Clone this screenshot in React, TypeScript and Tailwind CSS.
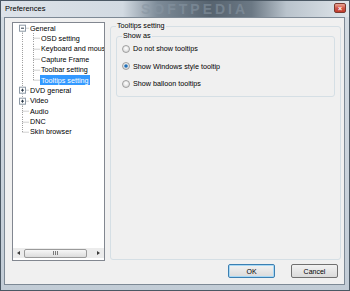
import React from "react";

type Row = {
  label: string;
  level: 0 | 1;
  box?: "-" | "+";
  last?: boolean;
  first?: boolean;
  selected?: boolean;
};

const rows: Row[] = [
  { label: "General", level: 0, box: "-", first: true },
  { label: "OSD setting", level: 1 },
  { label: "Keyboard and mouse", level: 1 },
  { label: "Capture Frame", level: 1 },
  { label: "Toolbar setting", level: 1 },
  { label: "Tooltips setting", level: 1, last: true, selected: true },
  { label: "DVD general", level: 0, box: "+" },
  { label: "Video", level: 0, box: "+" },
  { label: "Audio", level: 0 },
  { label: "DNC", level: 0 },
  { label: "Skin browser", level: 0, last: true },
];

const H = 10.4;
const MID = 5.2;
const LINE = "#a0a0a0";

const Connector = ({ row }: { row: Row }) => {
  const w = row.level === 0 ? 16 : 27;
  return (
    <svg width={w} height={H} className="shrink-0">
      {/* root vertical line */}
      {row.level === 1 && (
        <line x1={9.5} y1={0} x2={9.5} y2={H} stroke={LINE} strokeDasharray="1 1" />
      )}
      {row.level === 0 && !row.box && (
        <line x1={9.5} y1={0} x2={9.5} y2={row.last ? MID : H} stroke={LINE} strokeDasharray="1 1" />
      )}
      {row.level === 0 && row.box && (
        <>
          {!row.first && <line x1={9.5} y1={0} x2={9.5} y2={2} stroke={LINE} strokeDasharray="1 1" />}
          <line x1={9.5} y1={8.5} x2={9.5} y2={H} stroke={LINE} strokeDasharray="1 1" />
          <line x1={12.5} y1={MID} x2={16} y2={MID} stroke={LINE} strokeDasharray="1 1" />
          <rect x={6.5} y={2.2} width={6} height={6} fill="#fff" stroke="#8e9aa6" />
          <line x1={8} y1={MID} x2={11} y2={MID} stroke="#2b3a4a" />
          {row.box === "+" && <line x1={9.5} y1={MID - 1.5} x2={9.5} y2={MID + 1.5} stroke="#2b3a4a" />}
        </>
      )}
      {row.level === 0 && !row.box && (
        <line x1={9.5} y1={MID} x2={16} y2={MID} stroke={LINE} strokeDasharray="1 1" />
      )}
      {/* child lines */}
      {row.level === 1 && (
        <>
          <line x1={20.5} y1={0} x2={20.5} y2={row.last ? MID : H} stroke={LINE} strokeDasharray="1 1" />
          <line x1={20.5} y1={MID} x2={27} y2={MID} stroke={LINE} strokeDasharray="1 1" />
        </>
      )}
    </svg>
  );
};

const Radio = ({ checked }: { checked?: boolean }) => (
  <svg width={8} height={8} viewBox="0 0 8 8" className="shrink-0">
    <defs>
      <radialGradient id={checked ? "rg1" : "rg0"} cx="50%" cy="40%" r="60%">
        <stop offset="0%" stopColor="#ffffff" />
        <stop offset="100%" stopColor="#d6d6d6" />
      </radialGradient>
    </defs>
    <circle cx={4} cy={4} r={3.5} fill={`url(#${checked ? "rg1" : "rg0"})`} stroke="#8f8f8f" strokeWidth={0.8} />
    {checked && <circle cx={4} cy={4} r={1.8} fill="#1f6fb8" />}
  </svg>
);

export default function App() {
  return (
    <div className="w-[350px] h-[291px] flex flex-col overflow-hidden border border-[#4b5864] bg-gradient-to-b from-[#d4dce3] to-[#c2ccd6] font-['Liberation_Sans',Arial,sans-serif] text-black select-none">
      {/* Title bar */}
      <div className="relative h-[16px] flex items-center pl-[4px] pr-[3px] bg-[linear-gradient(90deg,#dde3e9_0%,#d2dae2_35%,#7d8b98_45%,#56636f_60%,#6b7884_72%,#b9c3cc_82%,#dfe5ea_100%)]">
        <span className="relative z-10 text-[7.5px] leading-none">Preferences</span>
        <span className="absolute left-[140px] top-[1px] text-[14px] font-bold leading-none tracking-[3px] text-[#8795a2]/60">
          SOFTPEDIA
        </span>
        <div className="ml-auto relative z-10 w-[12px] h-[10px] mt-[-2px] rounded-[2px] border border-[#7a3a30] bg-gradient-to-b from-[#e9a595] via-[#d0574a] to-[#c03a2a] flex items-center justify-center">
          <span className="text-[7px] leading-none font-bold text-white">×</span>
        </div>
      </div>

      {/* Client area */}
      <div className="flex-1 ml-[3px] mr-[4px] mb-[5px] border border-[#7d8995] bg-[#f0f0f0] flex flex-col text-[7.2px] leading-none">
        <div className="flex items-start pt-[4px] pl-[7px] pr-[3px] gap-[5px] h-[243px]">
          {/* Tree */}
          <div className="w-[93px] h-[239px] border border-[#828790] bg-white flex flex-col overflow-hidden">
            {rows.map((r) => (
              <div key={r.label} className="flex items-center h-[10.4px] whitespace-nowrap">
                <Connector row={r} />
                <span
                  className={`px-[1px] h-[10px] flex items-center ${
                    r.selected ? "bg-[#3399ff] text-white" : ""
                  }`}
                >
                  {r.label}
                </span>
              </div>
            ))}
            <div className="flex-1" />
            {/* horizontal scrollbar */}
            <div className="mb-[2px] h-[10px] flex items-center bg-[#ececec]">
              <div className="w-[11px] h-full flex items-center justify-center">
                <div className="w-0 h-0 border-y-[2.5px] border-y-transparent border-r-[3px] border-r-[#3a3a3a]" />
              </div>
              <div className="w-[63px] h-[9px] rounded-[2px] border border-[#9a9a9a] bg-gradient-to-b from-[#f7f7f7] to-[#dcdcdc] flex items-center justify-center gap-[1px]">
                <div className="w-[1px] h-[4px] bg-[#7a7a7a]" />
                <div className="w-[1px] h-[4px] bg-[#7a7a7a]" />
                <div className="w-[1px] h-[4px] bg-[#7a7a7a]" />
              </div>
              <div className="flex-1" />
              <div className="w-[11px] h-full flex items-center justify-center">
                <div className="w-0 h-0 border-y-[2.5px] border-y-transparent border-l-[3px] border-l-[#3a3a3a]" />
              </div>
            </div>
          </div>

          {/* Settings panel */}
          <fieldset className="flex-1 h-[238px] border border-[#d5dfe5] rounded-[3px] px-[5px]">
            <legend className="ml-[0px] px-[1px] leading-[8px]">Tooltips setting</legend>
            <fieldset className="mt-[2px] border border-[#d5dfe5] rounded-[3px] pl-[5px] pb-[3px]">
              <legend className="ml-[0px] px-[1px] leading-[8px]">Show as</legend>
              <div className="flex flex-col">
                {[
                  { t: "Do not show tooltips", c: false },
                  { t: "Show Windows style tooltip", c: true },
                  { t: "Show balloon tooltips", c: false },
                ].map((o) => (
                  <label key={o.t} className="h-[17.5px] flex items-center gap-[3px]">
                    <Radio checked={o.c} />
                    <span>{o.t}</span>
                  </label>
                ))}
              </div>
            </fieldset>
          </fieldset>
        </div>

        {/* Buttons */}
        <div className="mt-[3px] flex justify-end gap-[16px] pr-[6px]">
          <button className="w-[47px] h-[14px] rounded-[2px] border border-[#3c7fb1] shadow-[inset_0_0_0_1px_#a7d8f5] bg-gradient-to-b from-[#f2f2f2] to-[#dadada] text-[7px] leading-none">
            OK
          </button>
          <button className="w-[47px] h-[14px] rounded-[2px] border border-[#707070] bg-gradient-to-b from-[#f2f2f2] to-[#dadada] text-[7px] leading-none">
            Cancel
          </button>
        </div>
      </div>
    </div>
  );
}
